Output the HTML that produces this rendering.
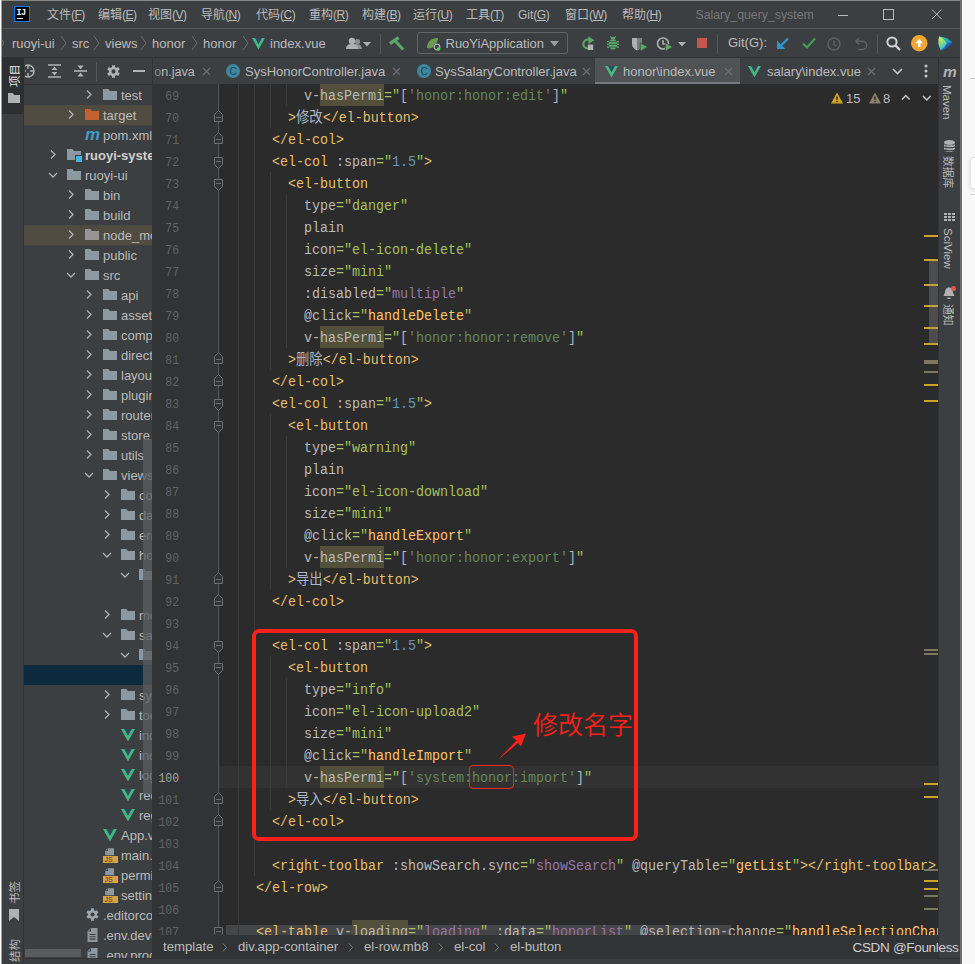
<!DOCTYPE html><html><head><meta charset="utf-8"><title>IDE</title><style>
*{box-sizing:border-box;margin:0;padding:0}
html,body{width:975px;height:964px;overflow:hidden;background:#fff}
body{position:relative;font-family:"Liberation Sans","Noto Sans CJK SC",sans-serif;font-size:13px;color:#bbb}
.abs{position:absolute}
#win{position:absolute;left:2px;top:0;width:958px;height:964px;background:#3c3f41;overflow:hidden}
.t{position:absolute;white-space:nowrap;line-height:20px}
svg{position:absolute;overflow:visible}
#code{position:absolute;left:150px;top:84px;width:786px;height:852px;background:#2b2b2b;overflow:hidden}
.ln{position:absolute;left:0;width:786px;height:22px;line-height:22px;font-family:"Liberation Mono","Noto Sans CJK SC",monospace;font-size:13.33px;white-space:pre;color:#a9b7c6}
.ln .no{position:absolute;left:0;width:27px;text-align:right;color:#606366;font-size:12.3px;transform:scaleX(.93);transform-origin:100% 50%}
.ln .c{position:absolute;left:72px;transform:scaleY(1.13);transform-origin:0 15.3px}
.tg{color:#e8bf6a}.at{color:#bababa}.st{color:#a5c261}.js{color:#6a8759}.nu{color:#6897bb}.pu{color:#9876aa}.fn{color:#ffc66d}.tx{color:#a9b7c6}
.hl{background:#52503a}
.hl2{background:#40464b}
#proj{position:absolute;left:22px;top:85px;width:128px;height:873px;overflow:hidden;background:#3c3f41}
.row{position:absolute;left:0;width:128px;height:20px}
.row .t{font-size:13px;color:#bbb;top:0.700px}
</style></head><body><div id="win"><div class="abs" style="left:0px;top:0px;width:958px;height:29px;background:#3c3f41;border-bottom:1px solid #555555"></div>
<div class="abs" style="left:0px;top:0px;width:958px;height:1px;background:#888888;"></div>
<div class="abs" style="left:12px;top:6px;width:16px;height:16px;background:#000;border:1px solid #087cfa;color:#fff;font:bold 8.500px/8px 'Liberation Mono',monospace;letter-spacing:-0.600px;padding:1.500px 0 0 1.500px">IJ<div style="width:6px;height:1px;background:#fff;margin-top:1.500px"></div></div>
<div class="t" style="left:45px;top:5px;font-size:12px;color:#bbb;">文件<span style="letter-spacing:-0.5px">(<u>F</u>)</span></div>
<div class="t" style="left:96px;top:5px;font-size:12px;color:#bbb;">编辑<span style="letter-spacing:-0.5px">(<u>E</u>)</span></div>
<div class="t" style="left:146px;top:5px;font-size:12px;color:#bbb;">视图<span style="letter-spacing:-0.5px">(<u>V</u>)</span></div>
<div class="t" style="left:199px;top:5px;font-size:12px;color:#bbb;">导航<span style="letter-spacing:-0.5px">(<u>N</u>)</span></div>
<div class="t" style="left:254px;top:5px;font-size:12px;color:#bbb;">代码<span style="letter-spacing:-0.5px">(<u>C</u>)</span></div>
<div class="t" style="left:307px;top:5px;font-size:12px;color:#bbb;">重构<span style="letter-spacing:-0.5px">(<u>R</u>)</span></div>
<div class="t" style="left:360px;top:5px;font-size:12px;color:#bbb;">构建<span style="letter-spacing:-0.5px">(<u>B</u>)</span></div>
<div class="t" style="left:411px;top:5px;font-size:12px;color:#bbb;">运行<span style="letter-spacing:-0.5px">(<u>U</u>)</span></div>
<div class="t" style="left:464px;top:5px;font-size:12px;color:#bbb;">工具<span style="letter-spacing:-0.5px">(<u>T</u>)</span></div>
<div class="t" style="left:516px;top:5px;font-size:12px;color:#bbb;">Git<span style="letter-spacing:-0.5px">(<u>G</u>)</span></div>
<div class="t" style="left:563px;top:5px;font-size:12px;color:#bbb;">窗口<span style="letter-spacing:-0.5px">(<u>W</u>)</span></div>
<div class="t" style="left:620px;top:5px;font-size:12px;color:#bbb;">帮助<span style="letter-spacing:-0.5px">(<u>H</u>)</span></div>
<div class="t" style="left:693.5px;top:4.5px;font-size:12.3px;color:#787878;">Salary_query_system</div>
<svg style="left:834.5px;top:8px;" width="14" height="14" viewBox="0 0 14 14"><path d="M1 7.5h10" stroke="#bbb" stroke-width="1" fill="none"/></svg>
<svg style="left:880px;top:8px;" width="14" height="14" viewBox="0 0 14 14"><rect x="1.5" y="1.5" width="10" height="10" stroke="#bbb" stroke-width="1" fill="none"/></svg>
<svg style="left:929px;top:8px;" width="14" height="14" viewBox="0 0 14 14"><path d="M1 1.5l9.500 9.500M10.500 1.5L1 11" stroke="#bbb" stroke-width="1" fill="none"/></svg>
<div class="abs" style="left:0px;top:30px;width:958px;height:28px;background:#3c3f41;border-bottom:1px solid #323232"></div>
<div class="t" style="left:10px;top:33.5px;font-size:13px;color:#bbb;">ruoyi-ui</div>
<div class="t" style="left:70px;top:33.5px;font-size:13px;color:#bbb;">src</div>
<div class="t" style="left:103px;top:33.5px;font-size:13px;color:#bbb;">views</div>
<div class="t" style="left:150px;top:33.5px;font-size:13px;color:#bbb;">honor</div>
<div class="t" style="left:201px;top:33.5px;font-size:13px;color:#bbb;">honor</div>
<svg style="left:-4px;top:35px;" width="8" height="16" viewBox="0 0 8 16"><path d="M1 1l5 7-5 7" stroke="#6c6f71" stroke-width="1" fill="none"/></svg>
<svg style="left:58px;top:35px;" width="8" height="16" viewBox="0 0 8 16"><path d="M1 1l5 7-5 7" stroke="#6c6f71" stroke-width="1" fill="none"/></svg>
<svg style="left:91px;top:35px;" width="8" height="16" viewBox="0 0 8 16"><path d="M1 1l5 7-5 7" stroke="#6c6f71" stroke-width="1" fill="none"/></svg>
<svg style="left:138px;top:35px;" width="8" height="16" viewBox="0 0 8 16"><path d="M1 1l5 7-5 7" stroke="#6c6f71" stroke-width="1" fill="none"/></svg>
<svg style="left:189px;top:35px;" width="8" height="16" viewBox="0 0 8 16"><path d="M1 1l5 7-5 7" stroke="#6c6f71" stroke-width="1" fill="none"/></svg>
<svg style="left:240px;top:35px;" width="8" height="16" viewBox="0 0 8 16"><path d="M1 1l5 7-5 7" stroke="#6c6f71" stroke-width="1" fill="none"/></svg>
<svg style="left:250px;top:37px;" width="13" height="13" viewBox="0 0 13 13"><path d="M0 1h3.2L6.5 7 9.8 1H13L6.5 12.5z" fill="#41b883"/><path d="M3.2 1h2.3l1 1.8 1-1.8h2.3L6.5 7z" fill="#35495e"/></svg>
<div class="t" style="left:268px;top:33.5px;font-size:13px;color:#bbb;">index.vue</div>
<svg style="left:344px;top:37px;" width="16" height="14" viewBox="0 0 16 14"><circle cx="6" cy="4" r="3.2" fill="#afb1b3"/><path d="M0 12c0-4 3-5 6-5s6 1 6 5z" fill="#afb1b3"/><circle cx="11.5" cy="4.5" r="2.6" fill="#afb1b3" opacity=".7"/><path d="M10 12c0-3-.5-4-1.5-4.8C12 6.5 16 7.5 16 12z" fill="#afb1b3" opacity=".7"/></svg>
<svg style="left:361px;top:42px;" width="8" height="5" viewBox="0 0 8 5"><path d="M0 0h8L4 4.5z" fill="#afb1b3"/></svg>
<div class="abs" style="left:378px;top:34px;width:1px;height:20px;background:#555758;"></div>
<svg style="left:387px;top:35.5px;" width="16" height="16" viewBox="0 0 16 16"><path d="M0 6.3L8.8 0.3 10.6 3 1.9 9z" fill="#59a869"/><path d="M4.800 5.6L7.3 3.9 15.3 12.6 13 14.6z" fill="#59a869"/></svg>
<div class="abs" style="left:415px;top:32px;width:151px;height:22px;border:1px solid #646464;border-radius:3px"></div>
<svg style="left:424px;top:36px;" width="16" height="16" viewBox="0 0 16 16"><path d="M1 12c0-6 4-10 11-10 0 2-.5 4-2 5.5-1 4-5 5.500-9 4.500z" fill="#6d9a4f"/><circle cx="11" cy="11" r="3.600" fill="#3c3f41"/><circle cx="11" cy="11" r="2.800" fill="none" stroke="#afb1b3" stroke-width="1.200"/><circle cx="12.5" cy="13" r="1.800" fill="#3fdc4a"/></svg>
<div class="t" style="left:443.5px;top:33.5px;font-size:13px;color:#bbb;">RuoYiApplication</div>
<svg style="left:548px;top:41px;" width="9" height="6" viewBox="0 0 9 6"><path d="M0 0h9L4.5 5.500z" fill="#9a9da0"/></svg>
<svg style="left:579px;top:36px;" width="14" height="14" viewBox="0 0 14 14"><path d="M7.6 3.7A4.4 4.4 0 1 0 7 12.4" stroke="#59a869" stroke-width="2" fill="none"/><path d="M7.3 0.3l6 3.900-6 3.800z" fill="#59a869"/><rect x="6.800" y="8.600" width="5.400" height="5.400" fill="#afb1b3"/></svg>
<svg style="left:605px;top:36px;" width="12" height="14" viewBox="0 0 12 14"><ellipse cx="6" cy="8.200" rx="4.300" ry="5.200" fill="#59a869"/><path d="M3.800 3a2.200 2.200 0 0 1 4.400 0z" fill="#59a869"/><path d="M3.200 0.300l1.600 2M8.800 0.300L7.200 2.300" stroke="#59a869" stroke-width="1.100" fill="none"/><path d="M0 5.600h12M0 8.400h12M0 11.200h12" stroke="#59a869" stroke-width="1.300"/><path d="M2 5.600h8M2 8.400h8M2 11.200h8" stroke="#3c3f41" stroke-width="0.700"/></svg>
<svg style="left:629px;top:36px;" width="17" height="16" viewBox="0 0 17 16"><path d="M1 2h10v6c0 3-2.500 5.500-5 6.500C3.500 13.500 1 11 1 8z" fill="#afb1b3"/><path d="M6 2h5v6c0 3-2.500 5.500-5 6.500z" fill="#7a7d80"/><path d="M9.300 6.800l7.400 4.200-7.400 4.200z" fill="#59a869" stroke="#3c3f41" stroke-width="0.700"/></svg>
<svg style="left:654px;top:36px;" width="17" height="16" viewBox="0 0 17 16"><circle cx="7" cy="7.500" r="5.500" fill="none" stroke="#afb1b3" stroke-width="1.600"/><path d="M7 4v4h3" stroke="#afb1b3" stroke-width="1.500" fill="none"/><path d="M9.300 6.800l7.400 4.200-7.400 4.200z" fill="#59a869" stroke="#3c3f41" stroke-width="0.700"/></svg>
<svg style="left:675.8px;top:42px;" width="8" height="5" viewBox="0 0 8 5"><path d="M0 0h8L4 4.500z" fill="#afb1b3"/></svg>
<div class="abs" style="left:695px;top:38px;width:10px;height:10px;background:#c75450;"></div>
<div class="abs" style="left:715px;top:34px;width:1px;height:20px;background:#555758;"></div>
<div class="t" style="left:726px;top:33px;font-size:13px;color:#bbb;">Git(G):</div>
<svg style="left:774px;top:38px;" width="13" height="11" viewBox="0 0 13 11"><path d="M12 0.500L3 9.500" stroke="#3592c4" stroke-width="2.400" fill="none"/><path d="M1 2.500v8.500h8.500z" fill="#3592c4"/></svg>
<svg style="left:800px;top:37px;" width="14" height="12" viewBox="0 0 14 12"><path d="M1 6.500l4 4 8-9" stroke="#499c54" stroke-width="2.200" fill="none"/></svg>
<svg style="left:825px;top:37px;" width="14" height="14" viewBox="0 0 14 14"><circle cx="7" cy="7" r="6" fill="none" stroke="#5e6163" stroke-width="1.500"/><path d="M7 3.500v4l2.500 1.500" stroke="#5e6163" stroke-width="1.400" fill="none"/></svg>
<svg style="left:853px;top:37px;" width="13" height="14" viewBox="0 0 13 14"><path d="M4 1L1 4.200l3 3.200" stroke="#5e6163" stroke-width="1.500" fill="none"/><path d="M1.500 4.200h6a4 4 0 0 1 0 8.300h-4" stroke="#5e6163" stroke-width="1.500" fill="none"/></svg>
<div class="abs" style="left:875px;top:34px;width:1px;height:20px;background:#555758;"></div>
<svg style="left:884px;top:36px;" width="15" height="15" viewBox="0 0 15 15"><circle cx="6" cy="6" r="4.600" fill="none" stroke="#d0d2d4" stroke-width="2"/><path d="M9.500 9.500l4.500 4.500" stroke="#d0d2d4" stroke-width="2.400"/></svg>
<svg style="left:908.8px;top:34.8px;" width="16.5" height="16.5" viewBox="0 0 16.5 16.5"><circle cx="8.250" cy="8.250" r="8.250" fill="#f0a732"/><path d="M8.250 4L12.200 8.300H9.450V12.100H7.050V8.300H4.300z" fill="#fff"/></svg>
<svg style="left:936px;top:35.5px;" width="15" height="15" viewBox="0 0 15 15"><defs><linearGradient id="lg1" x1="0.200" y1="0" x2="0.500" y2="1"><stop offset="0" stop-color="#e6f03a"/><stop offset="0.450" stop-color="#8fdc7a"/><stop offset="1" stop-color="#1fb4e4"/></linearGradient><linearGradient id="lg2" x1="0" y1="0" x2="1" y2="1"><stop offset="0" stop-color="#46c8a0"/><stop offset="1" stop-color="#1488dc"/></linearGradient></defs><path d="M1 0.500Q9 1 14.200 6.500Q10 12.500 2.800 14.600Q-0.800 8 1 0.500z" fill="#1763c4"/><path d="M1 0.500Q9 1 14.200 6.500L8.800 7.200z" fill="url(#lg2)"/><path d="M1 0.500Q6.500 3 8.800 7.200Q7 11.500 2.800 14.600Q-0.800 8 1 0.500z" fill="url(#lg1)"/></svg>
<div class="abs" style="left:0px;top:58px;width:22px;height:906px;background:#3c3f41;border-right:1px solid #323232"></div>
<div class="abs" style="left:0px;top:58px;width:22px;height:56px;background:#2d2f30;"></div>
<div class="t" style="left:6px;top:86.5px;font-size:11.5px;color:#e0e0e0;transform-origin:0 0;transform:rotate(-90deg);line-height:14px;">项目</div>
<svg style="left:6px;top:93px;" width="12" height="10" viewBox="0 0 12 10"><path d="M0 0h5l1 2h6v8H0z" fill="#afb1b3"/></svg>
<div class="t" style="left:6px;top:904px;font-size:11.5px;color:#bbb;transform-origin:0 0;transform:rotate(-90deg);line-height:14px;">书签</div>
<svg style="left:7px;top:908.5px;" width="10" height="12" viewBox="0 0 10 12"><path d="M0 0h10v12L5 8 0 12z" fill="#afb1b3"/></svg>
<div class="t" style="left:6px;top:962px;font-size:11.5px;color:#bbb;transform-origin:0 0;transform:rotate(-90deg);line-height:14px;">结构</div>
<div class="abs" style="left:22px;top:58px;width:128px;height:27px;background:#3c3f41;border-bottom:1px solid #323232"></div>
<svg style="left:17.5px;top:63px;clip-path:inset(0 0 0 5.5px)" width="16" height="16" viewBox="0 0 16 16"><circle cx="8" cy="8" r="6" fill="none" stroke="#afb1b3" stroke-width="1.500"/><path d="M8 2v4M8 10v4M2 8h4M10 8h4" stroke="#afb1b3" stroke-width="1.500"/></svg>
<svg style="left:46px;top:64px;" width="14" height="14" viewBox="0 0 14 14"><path d="M0 1h13M0 13h13" stroke="#afb1b3" stroke-width="1.600"/><path d="M6.500 2.500l3 3.500h-6zM6.500 11.500l3-3.500h-6z" fill="#afb1b3"/></svg>
<svg style="left:72px;top:64px;" width="14" height="14" viewBox="0 0 14 14"><path d="M0 7h13" stroke="#afb1b3" stroke-width="1.600"/><path d="M6.500 5.500l3-4h-6zM6.500 8.500l3 4h-6z" fill="#afb1b3"/></svg>
<div class="abs" style="left:94px;top:62px;width:1px;height:19px;background:#555758;"></div>
<svg style="left:103.5px;top:63.5px;transform:scale(.93)" width="15" height="15" viewBox="0 0 15 15"><path d="M5.86 2.78L5.90 0.68L9.10 0.68L9.14 2.78L10.77 3.72L12.60 2.71L14.20 5.48L12.41 6.56L12.41 8.44L14.20 9.52L12.60 12.29L10.77 11.28L9.14 12.22L9.10 14.32L5.90 14.32L5.86 12.22L4.23 11.28L2.40 12.29L0.80 9.52L2.59 8.44L2.59 6.56L0.80 5.48L2.40 2.71L4.23 3.72z M5.20 7.50a2.3 2.3 0 1 0 4.6 0a2.3 2.3 0 1 0 -4.6 0z" fill="#afb1b3" fill-rule="evenodd"/></svg>
<svg style="left:131px;top:70px;" width="12" height="2" viewBox="0 0 12 2"><rect width="12" height="2" fill="#afb1b3"/></svg>
<div id="proj"><div class="row" style="top:0px;"><svg style="left:62px;top:4px" width="7" height="11" viewBox="0 0 7 11"><path d="M1 1.500l4 4L1 9.500" stroke="#afb1b3" stroke-width="1.300" fill="none"/></svg><svg style="left:79px;top:3px" width="14" height="12" viewBox="0 0 14 12"><path d="M0 1h5.500l1.300 2H14v9H0z" fill="#8c99a1"/></svg><div class="t" style="left:97px;">test</div></div><div class="row" style="top:20px;background:#4f4b41"><svg style="left:44px;top:4px" width="7" height="11" viewBox="0 0 7 11"><path d="M1 1.500l4 4L1 9.500" stroke="#afb1b3" stroke-width="1.300" fill="none"/></svg><svg style="left:61px;top:3px" width="14" height="12" viewBox="0 0 14 12"><path d="M0 1h5.500l1.300 2H14v9H0z" fill="#c0622f"/></svg><div class="t" style="left:79px;">target</div></div><div class="row" style="top:40px;"><svg style="left:61px;top:3px" width="15" height="14" viewBox="0 0 15 14"><text x="0" y="12" font-family="Liberation Sans,sans-serif" font-size="17" font-weight="bold" font-style="italic" fill="#3e9cc9">m</text></svg><div class="t" style="left:79px;">pom.xml</div></div><div class="row" style="top:60px;"><svg style="left:26px;top:4px" width="7" height="11" viewBox="0 0 7 11"><path d="M1 1.500l4 4L1 9.500" stroke="#afb1b3" stroke-width="1.300" fill="none"/></svg><svg style="left:43px;top:3px" width="14" height="12" viewBox="0 0 14 12"><path d="M0 1h5.500l1.300 2H14v9H0z" fill="#8c99a1"/></svg><div class="abs" style="left:51px;top:10px;width:8px;height:8px;background:#40b6e0;border:1px solid #3c3f41"></div><div class="t" style="left:61px;font-weight:bold;color:#d0d0d0">ruoyi-system</div></div><div class="row" style="top:80px;"><svg style="left:24px;top:7px" width="10" height="7" viewBox="0 0 10 7"><path d="M1 1l4 4L9 1" stroke="#afb1b3" stroke-width="1.300" fill="none"/></svg><svg style="left:43px;top:3px" width="14" height="12" viewBox="0 0 14 12"><path d="M0 1h5.500l1.300 2H14v9H0z" fill="#8c99a1"/></svg><div class="t" style="left:61px;">ruoyi-ui</div></div><div class="row" style="top:100px;"><svg style="left:44px;top:4px" width="7" height="11" viewBox="0 0 7 11"><path d="M1 1.500l4 4L1 9.500" stroke="#afb1b3" stroke-width="1.300" fill="none"/></svg><svg style="left:61px;top:3px" width="14" height="12" viewBox="0 0 14 12"><path d="M0 1h5.500l1.300 2H14v9H0z" fill="#8c99a1"/></svg><div class="t" style="left:79px;">bin</div></div><div class="row" style="top:120px;"><svg style="left:44px;top:4px" width="7" height="11" viewBox="0 0 7 11"><path d="M1 1.500l4 4L1 9.500" stroke="#afb1b3" stroke-width="1.300" fill="none"/></svg><svg style="left:61px;top:3px" width="14" height="12" viewBox="0 0 14 12"><path d="M0 1h5.500l1.300 2H14v9H0z" fill="#8c99a1"/></svg><div class="t" style="left:79px;">build</div></div><div class="row" style="top:140px;background:#4f4b41"><svg style="left:44px;top:4px" width="7" height="11" viewBox="0 0 7 11"><path d="M1 1.500l4 4L1 9.500" stroke="#afb1b3" stroke-width="1.300" fill="none"/></svg><svg style="left:61px;top:3px" width="14" height="12" viewBox="0 0 14 12"><path d="M0 1h5.500l1.300 2H14v9H0z" fill="#959595"/></svg><div class="t" style="left:79px;">node_modules</div></div><div class="row" style="top:160px;"><svg style="left:44px;top:4px" width="7" height="11" viewBox="0 0 7 11"><path d="M1 1.500l4 4L1 9.500" stroke="#afb1b3" stroke-width="1.300" fill="none"/></svg><svg style="left:61px;top:3px" width="14" height="12" viewBox="0 0 14 12"><path d="M0 1h5.500l1.300 2H14v9H0z" fill="#8c99a1"/></svg><div class="t" style="left:79px;">public</div></div><div class="row" style="top:180px;"><svg style="left:42px;top:7px" width="10" height="7" viewBox="0 0 10 7"><path d="M1 1l4 4L9 1" stroke="#afb1b3" stroke-width="1.300" fill="none"/></svg><svg style="left:61px;top:3px" width="14" height="12" viewBox="0 0 14 12"><path d="M0 1h5.500l1.300 2H14v9H0z" fill="#8c99a1"/></svg><div class="t" style="left:79px;">src</div></div><div class="row" style="top:200px;"><svg style="left:62px;top:4px" width="7" height="11" viewBox="0 0 7 11"><path d="M1 1.500l4 4L1 9.500" stroke="#afb1b3" stroke-width="1.300" fill="none"/></svg><svg style="left:79px;top:3px" width="14" height="12" viewBox="0 0 14 12"><path d="M0 1h5.500l1.300 2H14v9H0z" fill="#8c99a1"/></svg><div class="t" style="left:97px;">api</div></div><div class="row" style="top:220px;"><svg style="left:62px;top:4px" width="7" height="11" viewBox="0 0 7 11"><path d="M1 1.500l4 4L1 9.500" stroke="#afb1b3" stroke-width="1.300" fill="none"/></svg><svg style="left:79px;top:3px" width="14" height="12" viewBox="0 0 14 12"><path d="M0 1h5.500l1.300 2H14v9H0z" fill="#8c99a1"/></svg><div class="t" style="left:97px;">assets</div></div><div class="row" style="top:240px;"><svg style="left:62px;top:4px" width="7" height="11" viewBox="0 0 7 11"><path d="M1 1.500l4 4L1 9.500" stroke="#afb1b3" stroke-width="1.300" fill="none"/></svg><svg style="left:79px;top:3px" width="14" height="12" viewBox="0 0 14 12"><path d="M0 1h5.500l1.300 2H14v9H0z" fill="#8c99a1"/></svg><div class="t" style="left:97px;">components</div></div><div class="row" style="top:260px;"><svg style="left:62px;top:4px" width="7" height="11" viewBox="0 0 7 11"><path d="M1 1.500l4 4L1 9.500" stroke="#afb1b3" stroke-width="1.300" fill="none"/></svg><svg style="left:79px;top:3px" width="14" height="12" viewBox="0 0 14 12"><path d="M0 1h5.500l1.300 2H14v9H0z" fill="#8c99a1"/></svg><div class="t" style="left:97px;">directive</div></div><div class="row" style="top:280px;"><svg style="left:62px;top:4px" width="7" height="11" viewBox="0 0 7 11"><path d="M1 1.500l4 4L1 9.500" stroke="#afb1b3" stroke-width="1.300" fill="none"/></svg><svg style="left:79px;top:3px" width="14" height="12" viewBox="0 0 14 12"><path d="M0 1h5.500l1.300 2H14v9H0z" fill="#8c99a1"/></svg><div class="t" style="left:97px;">layout</div></div><div class="row" style="top:300px;"><svg style="left:62px;top:4px" width="7" height="11" viewBox="0 0 7 11"><path d="M1 1.500l4 4L1 9.500" stroke="#afb1b3" stroke-width="1.300" fill="none"/></svg><svg style="left:79px;top:3px" width="14" height="12" viewBox="0 0 14 12"><path d="M0 1h5.500l1.300 2H14v9H0z" fill="#8c99a1"/></svg><div class="t" style="left:97px;">plugins</div></div><div class="row" style="top:320px;"><svg style="left:62px;top:4px" width="7" height="11" viewBox="0 0 7 11"><path d="M1 1.500l4 4L1 9.500" stroke="#afb1b3" stroke-width="1.300" fill="none"/></svg><svg style="left:79px;top:3px" width="14" height="12" viewBox="0 0 14 12"><path d="M0 1h5.500l1.300 2H14v9H0z" fill="#8c99a1"/></svg><div class="t" style="left:97px;">router</div></div><div class="row" style="top:340px;"><svg style="left:62px;top:4px" width="7" height="11" viewBox="0 0 7 11"><path d="M1 1.500l4 4L1 9.500" stroke="#afb1b3" stroke-width="1.300" fill="none"/></svg><svg style="left:79px;top:3px" width="14" height="12" viewBox="0 0 14 12"><path d="M0 1h5.500l1.300 2H14v9H0z" fill="#8c99a1"/></svg><div class="t" style="left:97px;">store</div></div><div class="row" style="top:360px;"><svg style="left:62px;top:4px" width="7" height="11" viewBox="0 0 7 11"><path d="M1 1.500l4 4L1 9.500" stroke="#afb1b3" stroke-width="1.300" fill="none"/></svg><svg style="left:79px;top:3px" width="14" height="12" viewBox="0 0 14 12"><path d="M0 1h5.500l1.300 2H14v9H0z" fill="#8c99a1"/></svg><div class="t" style="left:97px;">utils</div></div><div class="row" style="top:380px;"><svg style="left:60px;top:7px" width="10" height="7" viewBox="0 0 10 7"><path d="M1 1l4 4L9 1" stroke="#afb1b3" stroke-width="1.300" fill="none"/></svg><svg style="left:79px;top:3px" width="14" height="12" viewBox="0 0 14 12"><path d="M0 1h5.500l1.300 2H14v9H0z" fill="#8c99a1"/></svg><div class="t" style="left:97px;">views</div></div><div class="row" style="top:400px;"><svg style="left:80px;top:4px" width="7" height="11" viewBox="0 0 7 11"><path d="M1 1.500l4 4L1 9.500" stroke="#afb1b3" stroke-width="1.300" fill="none"/></svg><svg style="left:97px;top:3px" width="14" height="12" viewBox="0 0 14 12"><path d="M0 1h5.500l1.300 2H14v9H0z" fill="#8c99a1"/></svg><div class="t" style="left:115px;">components</div></div><div class="row" style="top:420px;"><svg style="left:80px;top:4px" width="7" height="11" viewBox="0 0 7 11"><path d="M1 1.500l4 4L1 9.500" stroke="#afb1b3" stroke-width="1.300" fill="none"/></svg><svg style="left:97px;top:3px" width="14" height="12" viewBox="0 0 14 12"><path d="M0 1h5.500l1.300 2H14v9H0z" fill="#8c99a1"/></svg><div class="t" style="left:115px;">dashboard</div></div><div class="row" style="top:440px;"><svg style="left:80px;top:4px" width="7" height="11" viewBox="0 0 7 11"><path d="M1 1.500l4 4L1 9.500" stroke="#afb1b3" stroke-width="1.300" fill="none"/></svg><svg style="left:97px;top:3px" width="14" height="12" viewBox="0 0 14 12"><path d="M0 1h5.500l1.300 2H14v9H0z" fill="#8c99a1"/></svg><div class="t" style="left:115px;">error</div></div><div class="row" style="top:460px;"><svg style="left:78px;top:7px" width="10" height="7" viewBox="0 0 10 7"><path d="M1 1l4 4L9 1" stroke="#afb1b3" stroke-width="1.300" fill="none"/></svg><svg style="left:97px;top:3px" width="14" height="12" viewBox="0 0 14 12"><path d="M0 1h5.500l1.300 2H14v9H0z" fill="#8c99a1"/></svg><div class="t" style="left:115px;">honor</div></div><div class="row" style="top:480px;"><svg style="left:96px;top:7px" width="10" height="7" viewBox="0 0 10 7"><path d="M1 1l4 4L9 1" stroke="#afb1b3" stroke-width="1.300" fill="none"/></svg><svg style="left:115px;top:3px" width="14" height="12" viewBox="0 0 14 12"><path d="M0 1h5.500l1.300 2H14v9H0z" fill="#8c99a1"/></svg><div class="t" style="left:133px;"></div></div><div class="row" style="top:500px;"><div class="t" style="left:151px;"></div></div><div class="row" style="top:520px;"><svg style="left:80px;top:4px" width="7" height="11" viewBox="0 0 7 11"><path d="M1 1.500l4 4L1 9.500" stroke="#afb1b3" stroke-width="1.300" fill="none"/></svg><svg style="left:97px;top:3px" width="14" height="12" viewBox="0 0 14 12"><path d="M0 1h5.500l1.300 2H14v9H0z" fill="#8c99a1"/></svg><div class="t" style="left:115px;">monitor</div></div><div class="row" style="top:540px;"><svg style="left:78px;top:7px" width="10" height="7" viewBox="0 0 10 7"><path d="M1 1l4 4L9 1" stroke="#afb1b3" stroke-width="1.300" fill="none"/></svg><svg style="left:97px;top:3px" width="14" height="12" viewBox="0 0 14 12"><path d="M0 1h5.500l1.300 2H14v9H0z" fill="#8c99a1"/></svg><div class="t" style="left:115px;">salary</div></div><div class="row" style="top:560px;"><svg style="left:96px;top:7px" width="10" height="7" viewBox="0 0 10 7"><path d="M1 1l4 4L9 1" stroke="#afb1b3" stroke-width="1.300" fill="none"/></svg><svg style="left:115px;top:3px" width="14" height="12" viewBox="0 0 14 12"><path d="M0 1h5.500l1.300 2H14v9H0z" fill="#8c99a1"/></svg><div class="t" style="left:133px;"></div></div><div class="row" style="top:580px;background:#0d293e"><div class="t" style="left:151px;"></div></div><div class="row" style="top:600px;"><svg style="left:80px;top:4px" width="7" height="11" viewBox="0 0 7 11"><path d="M1 1.500l4 4L1 9.500" stroke="#afb1b3" stroke-width="1.300" fill="none"/></svg><svg style="left:97px;top:3px" width="14" height="12" viewBox="0 0 14 12"><path d="M0 1h5.500l1.300 2H14v9H0z" fill="#8c99a1"/></svg><div class="t" style="left:115px;">system</div></div><div class="row" style="top:620px;"><svg style="left:80px;top:4px" width="7" height="11" viewBox="0 0 7 11"><path d="M1 1.500l4 4L1 9.500" stroke="#afb1b3" stroke-width="1.300" fill="none"/></svg><svg style="left:97px;top:3px" width="14" height="12" viewBox="0 0 14 12"><path d="M0 1h5.500l1.300 2H14v9H0z" fill="#8c99a1"/></svg><div class="t" style="left:115px;">tool</div></div><div class="row" style="top:640px;"><svg style="left:97px;top:3px" width="14" height="14" viewBox="0 0 14 14"><path d="M0 1h3.400L7 7.500 10.600 1H14L7 13.500z" fill="#41b883"/><path d="M3.400 1h2.400L7 3l1.200-2h2.400L7 7.500z" fill="#35495e"/></svg><div class="t" style="left:115px;">index.vue</div></div><div class="row" style="top:660px;"><svg style="left:97px;top:3px" width="14" height="14" viewBox="0 0 14 14"><path d="M0 1h3.400L7 7.500 10.600 1H14L7 13.500z" fill="#41b883"/><path d="M3.400 1h2.400L7 3l1.200-2h2.400L7 7.500z" fill="#35495e"/></svg><div class="t" style="left:115px;">index_v1.vue</div></div><div class="row" style="top:680px;"><svg style="left:97px;top:3px" width="14" height="14" viewBox="0 0 14 14"><path d="M0 1h3.400L7 7.500 10.600 1H14L7 13.500z" fill="#41b883"/><path d="M3.400 1h2.400L7 3l1.200-2h2.400L7 7.500z" fill="#35495e"/></svg><div class="t" style="left:115px;">login.vue</div></div><div class="row" style="top:700px;"><svg style="left:97px;top:3px" width="14" height="14" viewBox="0 0 14 14"><path d="M0 1h3.400L7 7.500 10.600 1H14L7 13.500z" fill="#41b883"/><path d="M3.400 1h2.400L7 3l1.200-2h2.400L7 7.500z" fill="#35495e"/></svg><div class="t" style="left:115px;">redirect.vue</div></div><div class="row" style="top:720px;"><svg style="left:97px;top:3px" width="14" height="14" viewBox="0 0 14 14"><path d="M0 1h3.400L7 7.500 10.600 1H14L7 13.500z" fill="#41b883"/><path d="M3.400 1h2.400L7 3l1.200-2h2.400L7 7.500z" fill="#35495e"/></svg><div class="t" style="left:115px;">register.vue</div></div><div class="row" style="top:740px;"><svg style="left:79px;top:3px" width="14" height="14" viewBox="0 0 14 14"><path d="M0 1h3.400L7 7.500 10.600 1H14L7 13.500z" fill="#41b883"/><path d="M3.400 1h2.400L7 3l1.200-2h2.400L7 7.500z" fill="#35495e"/></svg><div class="t" style="left:97px;">App.vue</div></div><div class="row" style="top:760px;"><svg style="left:79px;top:3px" width="15" height="15" viewBox="0 0 15 15"><path d="M5 0.200h6v7.100H2.200V3z" fill="#9aa7b0" opacity=".85"/><path d="M5 0.200L2.200 3H5z" fill="#3c3f41"/><path d="M4.300 0.200v2.100H2.200z" fill="#9aa7b0" opacity=".6"/><rect x="0" y="8" width="15" height="7" fill="#d9a343"/><text x="1.500" y="14" font-family="Liberation Sans,sans-serif" font-size="7" fill="#3c3f41">JS</text></svg><div class="t" style="left:97px;">main.js</div></div><div class="row" style="top:780px;"><svg style="left:79px;top:3px" width="15" height="15" viewBox="0 0 15 15"><path d="M5 0.200h6v7.100H2.200V3z" fill="#9aa7b0" opacity=".85"/><path d="M5 0.200L2.200 3H5z" fill="#3c3f41"/><path d="M4.300 0.200v2.100H2.200z" fill="#9aa7b0" opacity=".6"/><rect x="0" y="8" width="15" height="7" fill="#d9a343"/><text x="1.500" y="14" font-family="Liberation Sans,sans-serif" font-size="7" fill="#3c3f41">JS</text></svg><div class="t" style="left:97px;">permission.js</div></div><div class="row" style="top:800px;"><svg style="left:79px;top:3px" width="15" height="15" viewBox="0 0 15 15"><path d="M5 0.200h6v7.100H2.200V3z" fill="#9aa7b0" opacity=".85"/><path d="M5 0.200L2.200 3H5z" fill="#3c3f41"/><path d="M4.300 0.200v2.100H2.200z" fill="#9aa7b0" opacity=".6"/><rect x="0" y="8" width="15" height="7" fill="#d9a343"/><text x="1.500" y="14" font-family="Liberation Sans,sans-serif" font-size="7" fill="#3c3f41">JS</text></svg><div class="t" style="left:97px;">settings.js</div></div><div class="row" style="top:820px;"><svg style="left:60.5px;top:2px;transform:scale(.9)" width="15" height="15" viewBox="0 0 15 15"><path d="M5.86 2.78L5.90 0.68L9.10 0.68L9.14 2.78L10.77 3.72L12.60 2.71L14.20 5.48L12.41 6.56L12.41 8.44L14.20 9.52L12.60 12.29L10.77 11.28L9.14 12.22L9.10 14.32L5.90 14.32L5.86 12.22L4.23 11.28L2.40 12.29L0.80 9.52L2.59 8.44L2.59 6.56L0.80 5.48L2.40 2.71L4.23 3.72z M5.20 7.50a2.3 2.3 0 1 0 4.6 0a2.3 2.3 0 1 0 -4.6 0z" fill="#9aa7b0" fill-rule="evenodd"/></svg><div class="t" style="left:79px;">.editorconfig</div></div><div class="row" style="top:840px;"><svg style="left:62.5px;top:3px" width="11" height="14" viewBox="0 0 11 14"><path d="M4 0h6.500v14H0.500V3.500z" fill="#9aa7b0" opacity=".85"/><path d="M4 0L0.500 3.500H4z" fill="#3c3f41"/><path d="M3.200 0.300v2.600H0.600z" fill="#9aa7b0" opacity=".55"/><path d="M2.500 6.500h6M2.500 8.800h6M2.500 11.100h6" stroke="#3c3f41" stroke-width="1.100"/></svg><div class="t" style="left:79px;">.env.development</div></div><div class="row" style="top:860px;"><svg style="left:62.5px;top:3px" width="11" height="14" viewBox="0 0 11 14"><path d="M4 0h6.500v14H0.500V3.500z" fill="#9aa7b0" opacity=".85"/><path d="M4 0L0.500 3.500H4z" fill="#3c3f41"/><path d="M3.200 0.300v2.600H0.600z" fill="#9aa7b0" opacity=".55"/><path d="M2.500 6.500h6M2.500 8.800h6M2.500 11.100h6" stroke="#3c3f41" stroke-width="1.100"/></svg><div class="t" style="left:79px;">.env.production</div></div><div class="abs" style="left:119px;top:354px;width:9px;height:354.5px;background:#5b5e60;opacity:.75"></div><div class="abs" style="left:1px;top:864px;width:56px;height:8px;background:#595b5d"></div></div>
<div class="abs" style="left:150px;top:58px;width:786px;height:27px;background:#3c3f41;border-bottom:1px solid #323232"></div>
<div class="abs" style="left:150px;top:58px;width:1px;height:26px;background:#323232;"></div>
<div class="abs" style="left:593px;top:58px;width:145px;height:26px;background:#4e5254;"></div>
<div class="abs" style="left:593px;top:82px;width:145px;height:3px;background:#747a80;"></div>
<div class="t" style="left:152.3px;top:62px;font-size:12.5px;color:#bbb;"><span style="opacity:.6">o</span>n.java</div>
<svg style="left:199.5px;top:67px;" width="9" height="9" viewBox="0 0 9 9"><path d="M1 1l7 7M8 1L1 8" stroke="#6e7072" stroke-width="1.100" fill="none"/></svg>
<svg style="left:224px;top:64px;" width="14" height="14" viewBox="0 0 14 14"><circle cx="7" cy="7" r="7" fill="#3e86a0"/><text x="3.400" y="10.500" font-family="Liberation Sans,sans-serif" font-size="10" fill="#23424f">C</text></svg>
<div class="t" style="left:243px;top:62px;font-size:13px;color:#bbb;">SysHonorController.java</div>
<svg style="left:390px;top:67px;" width="9" height="9" viewBox="0 0 9 9"><path d="M1 1l7 7M8 1L1 8" stroke="#6e7072" stroke-width="1.100" fill="none"/></svg>
<svg style="left:414.5px;top:64px;" width="14" height="14" viewBox="0 0 14 14"><circle cx="7" cy="7" r="7" fill="#3e86a0"/><text x="3.400" y="10.500" font-family="Liberation Sans,sans-serif" font-size="10" fill="#23424f">C</text></svg>
<div class="t" style="left:433px;top:62px;font-size:13px;color:#bbb;">SysSalaryController.java</div>
<svg style="left:580px;top:67px;" width="9" height="9" viewBox="0 0 9 9"><path d="M1 1l7 7M8 1L1 8" stroke="#6e7072" stroke-width="1.100" fill="none"/></svg>
<svg style="left:603px;top:65px;" width="13" height="13" viewBox="0 0 13 13"><path d="M0 1h3.2L6.5 7 9.8 1H13L6.5 12.5z" fill="#41b883"/><path d="M3.2 1h2.3l1 1.8 1-1.8h2.3L6.5 7z" fill="#35495e"/></svg>
<div class="t" style="left:621px;top:62px;font-size:13px;color:#bbb;">honor\index.vue</div>
<svg style="left:722px;top:67px;" width="9" height="9" viewBox="0 0 9 9"><path d="M1 1l7 7M8 1L1 8" stroke="#6e7072" stroke-width="1.100" fill="none"/></svg>
<svg style="left:746px;top:65px;" width="13" height="13" viewBox="0 0 13 13"><path d="M0 1h3.2L6.5 7 9.8 1H13L6.5 12.5z" fill="#41b883"/><path d="M3.2 1h2.3l1 1.8 1-1.8h2.3L6.5 7z" fill="#35495e"/></svg>
<div class="t" style="left:765px;top:62px;font-size:13px;color:#bbb;">salary\index.vue</div>
<svg style="left:865px;top:67px;" width="9" height="9" viewBox="0 0 9 9"><path d="M1 1l7 7M8 1L1 8" stroke="#6e7072" stroke-width="1.100" fill="none"/></svg>
<svg style="left:890px;top:68px;" width="11" height="7" viewBox="0 0 11 7"><path d="M1 1l4.500 4.500L10 1" stroke="#c8c8c8" stroke-width="1.600" fill="none"/></svg>
<svg style="left:921.5px;top:64px;" width="4" height="14" viewBox="0 0 4 14"><circle cx="2" cy="2" r="1.500" fill="#c8c8c8"/><circle cx="2" cy="7" r="1.500" fill="#c8c8c8"/><circle cx="2" cy="12" r="1.500" fill="#c8c8c8"/></svg>
<div id="code"><div class="abs" style="left:0;top:0;width:66px;height:852px;background:#313335"></div><div class="abs" style="left:66px;top:0;width:1px;height:852px;background:#555758"></div><div class="abs" style="left:168px;top:0px;width:64px;height:22px;background:#52503a"></div><div class="abs" style="left:86px;top:0px;width:1px;height:22px;background:#393939"></div><div class="abs" style="left:102px;top:0px;width:1px;height:22px;background:#393939"></div><div class="abs" style="left:118px;top:0px;width:1px;height:22px;background:#393939"></div><div class="abs" style="left:134px;top:0px;width:1px;height:22px;background:#393939"></div><div class="ln" style="top:2.2px"><span class="no" style="top:-0.7px;">69</span><span class="c" style="left:152px"><span class="at">v-</span><span class="at">hasPermi</span><span class="st">="</span><span class="tx">[</span><span class="js">'honor:honor:edit'</span><span class="tx">]</span><span class="st">"</span></span></div><div class="abs" style="left:86px;top:22px;width:1px;height:22px;background:#393939"></div><div class="abs" style="left:102px;top:22px;width:1px;height:22px;background:#393939"></div><div class="abs" style="left:118px;top:22px;width:1px;height:22px;background:#393939"></div><div class="ln" style="top:24.2px"><span class="no" style="top:-0.7px;">70</span><span class="c" style="left:136px"><span class="tg">&gt;</span><span class="tx">修改</span><span class="tg">&lt;/el-button&gt;</span></span></div><svg style="left:62px;top:25.7px" width="9" height="12" viewBox="0 0 9 12"><path d="M0.500 11.500V4.500L4.500 0.500 8.500 4.500v7z" fill="#313335" stroke="#6c6e70" stroke-width="1"/><path d="M2 7.500h5" stroke="#6c6e70" stroke-width="1"/></svg><div class="abs" style="left:86px;top:44px;width:1px;height:22px;background:#393939"></div><div class="abs" style="left:102px;top:44px;width:1px;height:22px;background:#393939"></div><div class="ln" style="top:46.2px"><span class="no" style="top:-0.7px;">71</span><span class="c" style="left:120px"><span class="tg">&lt;/el-col&gt;</span></span></div><svg style="left:62px;top:47.7px" width="9" height="12" viewBox="0 0 9 12"><path d="M0.500 11.500V4.500L4.500 0.500 8.500 4.500v7z" fill="#313335" stroke="#6c6e70" stroke-width="1"/><path d="M2 7.500h5" stroke="#6c6e70" stroke-width="1"/></svg><div class="abs" style="left:86px;top:66px;width:1px;height:22px;background:#393939"></div><div class="abs" style="left:102px;top:66px;width:1px;height:22px;background:#393939"></div><div class="ln" style="top:68.2px"><span class="no" style="top:-0.7px;">72</span><span class="c" style="left:120px"><span class="tg">&lt;el-col </span><span class="at">:span</span><span class="st">="</span><span class="nu">1.5</span><span class="st">"</span><span class="tg">&gt;</span></span></div><svg style="left:62px;top:73px" width="9" height="12" viewBox="0 0 9 12"><path d="M0.500 0.500h8V7.500L4.500 11.500 0.500 7.500z" fill="#313335" stroke="#6c6e70" stroke-width="1"/><path d="M2 4.500h5" stroke="#6c6e70" stroke-width="1"/></svg><div class="abs" style="left:86px;top:88px;width:1px;height:22px;background:#393939"></div><div class="abs" style="left:102px;top:88px;width:1px;height:22px;background:#393939"></div><div class="abs" style="left:118px;top:88px;width:1px;height:22px;background:#393939"></div><div class="ln" style="top:90.2px"><span class="no" style="top:-0.7px;">73</span><span class="c" style="left:136px"><span class="tg">&lt;el-button</span></span></div><svg style="left:62px;top:95px" width="9" height="12" viewBox="0 0 9 12"><path d="M0.500 0.500h8V7.500L4.500 11.500 0.500 7.500z" fill="#313335" stroke="#6c6e70" stroke-width="1"/><path d="M2 4.500h5" stroke="#6c6e70" stroke-width="1"/></svg><div class="abs" style="left:86px;top:110px;width:1px;height:22px;background:#393939"></div><div class="abs" style="left:102px;top:110px;width:1px;height:22px;background:#393939"></div><div class="abs" style="left:118px;top:110px;width:1px;height:22px;background:#393939"></div><div class="abs" style="left:134px;top:110px;width:1px;height:22px;background:#393939"></div><div class="ln" style="top:112.2px"><span class="no" style="top:-0.7px;">74</span><span class="c" style="left:152px"><span class="at">type</span><span class="st">="danger"</span></span></div><div class="abs" style="left:86px;top:132px;width:1px;height:22px;background:#393939"></div><div class="abs" style="left:102px;top:132px;width:1px;height:22px;background:#393939"></div><div class="abs" style="left:118px;top:132px;width:1px;height:22px;background:#393939"></div><div class="abs" style="left:134px;top:132px;width:1px;height:22px;background:#393939"></div><div class="ln" style="top:134.2px"><span class="no" style="top:-0.7px;">75</span><span class="c" style="left:152px"><span class="at">plain</span></span></div><div class="abs" style="left:86px;top:154px;width:1px;height:22px;background:#393939"></div><div class="abs" style="left:102px;top:154px;width:1px;height:22px;background:#393939"></div><div class="abs" style="left:118px;top:154px;width:1px;height:22px;background:#393939"></div><div class="abs" style="left:134px;top:154px;width:1px;height:22px;background:#393939"></div><div class="ln" style="top:156.2px"><span class="no" style="top:-0.7px;">76</span><span class="c" style="left:152px"><span class="at">icon</span><span class="st">="el-icon-delete"</span></span></div><div class="abs" style="left:86px;top:176px;width:1px;height:22px;background:#393939"></div><div class="abs" style="left:102px;top:176px;width:1px;height:22px;background:#393939"></div><div class="abs" style="left:118px;top:176px;width:1px;height:22px;background:#393939"></div><div class="abs" style="left:134px;top:176px;width:1px;height:22px;background:#393939"></div><div class="ln" style="top:178.2px"><span class="no" style="top:-0.7px;">77</span><span class="c" style="left:152px"><span class="at">size</span><span class="st">="mini"</span></span></div><div class="abs" style="left:86px;top:198px;width:1px;height:22px;background:#393939"></div><div class="abs" style="left:102px;top:198px;width:1px;height:22px;background:#393939"></div><div class="abs" style="left:118px;top:198px;width:1px;height:22px;background:#393939"></div><div class="abs" style="left:134px;top:198px;width:1px;height:22px;background:#393939"></div><div class="ln" style="top:200.2px"><span class="no" style="top:-0.7px;">78</span><span class="c" style="left:152px"><span class="at">:disabled</span><span class="st">="</span><span class="pu">multiple</span><span class="st">"</span></span></div><div class="abs" style="left:86px;top:220px;width:1px;height:22px;background:#393939"></div><div class="abs" style="left:102px;top:220px;width:1px;height:22px;background:#393939"></div><div class="abs" style="left:118px;top:220px;width:1px;height:22px;background:#393939"></div><div class="abs" style="left:134px;top:220px;width:1px;height:22px;background:#393939"></div><div class="ln" style="top:222.2px"><span class="no" style="top:-0.7px;">79</span><span class="c" style="left:152px"><span class="at">@click</span><span class="st">="</span><span class="fn">handleDelete</span><span class="st">"</span></span></div><div class="abs" style="left:168px;top:242px;width:64px;height:22px;background:#52503a"></div><div class="abs" style="left:86px;top:242px;width:1px;height:22px;background:#393939"></div><div class="abs" style="left:102px;top:242px;width:1px;height:22px;background:#393939"></div><div class="abs" style="left:118px;top:242px;width:1px;height:22px;background:#393939"></div><div class="abs" style="left:134px;top:242px;width:1px;height:22px;background:#393939"></div><div class="ln" style="top:244.2px"><span class="no" style="top:-0.7px;">80</span><span class="c" style="left:152px"><span class="at">v-</span><span class="at">hasPermi</span><span class="st">="</span><span class="tx">[</span><span class="js">'honor:honor:remove'</span><span class="tx">]</span><span class="st">"</span></span></div><div class="abs" style="left:86px;top:264px;width:1px;height:22px;background:#393939"></div><div class="abs" style="left:102px;top:264px;width:1px;height:22px;background:#393939"></div><div class="abs" style="left:118px;top:264px;width:1px;height:22px;background:#393939"></div><div class="ln" style="top:266.2px"><span class="no" style="top:-0.7px;">81</span><span class="c" style="left:136px"><span class="tg">&gt;</span><span class="tx">删除</span><span class="tg">&lt;/el-button&gt;</span></span></div><svg style="left:62px;top:267.7px" width="9" height="12" viewBox="0 0 9 12"><path d="M0.500 11.500V4.500L4.500 0.500 8.500 4.500v7z" fill="#313335" stroke="#6c6e70" stroke-width="1"/><path d="M2 7.500h5" stroke="#6c6e70" stroke-width="1"/></svg><div class="abs" style="left:86px;top:286px;width:1px;height:22px;background:#393939"></div><div class="abs" style="left:102px;top:286px;width:1px;height:22px;background:#393939"></div><div class="ln" style="top:288.2px"><span class="no" style="top:-0.7px;">82</span><span class="c" style="left:120px"><span class="tg">&lt;/el-col&gt;</span></span></div><svg style="left:62px;top:289.7px" width="9" height="12" viewBox="0 0 9 12"><path d="M0.500 11.500V4.500L4.500 0.500 8.500 4.500v7z" fill="#313335" stroke="#6c6e70" stroke-width="1"/><path d="M2 7.500h5" stroke="#6c6e70" stroke-width="1"/></svg><div class="abs" style="left:86px;top:308px;width:1px;height:22px;background:#393939"></div><div class="abs" style="left:102px;top:308px;width:1px;height:22px;background:#393939"></div><div class="ln" style="top:310.2px"><span class="no" style="top:-0.7px;">83</span><span class="c" style="left:120px"><span class="tg">&lt;el-col </span><span class="at">:span</span><span class="st">="</span><span class="nu">1.5</span><span class="st">"</span><span class="tg">&gt;</span></span></div><svg style="left:62px;top:315px" width="9" height="12" viewBox="0 0 9 12"><path d="M0.500 0.500h8V7.500L4.500 11.500 0.500 7.500z" fill="#313335" stroke="#6c6e70" stroke-width="1"/><path d="M2 4.500h5" stroke="#6c6e70" stroke-width="1"/></svg><div class="abs" style="left:86px;top:330px;width:1px;height:22px;background:#393939"></div><div class="abs" style="left:102px;top:330px;width:1px;height:22px;background:#393939"></div><div class="abs" style="left:118px;top:330px;width:1px;height:22px;background:#393939"></div><div class="ln" style="top:332.2px"><span class="no" style="top:-0.7px;">84</span><span class="c" style="left:136px"><span class="tg">&lt;el-button</span></span></div><svg style="left:62px;top:337px" width="9" height="12" viewBox="0 0 9 12"><path d="M0.500 0.500h8V7.500L4.500 11.500 0.500 7.500z" fill="#313335" stroke="#6c6e70" stroke-width="1"/><path d="M2 4.500h5" stroke="#6c6e70" stroke-width="1"/></svg><div class="abs" style="left:86px;top:352px;width:1px;height:22px;background:#393939"></div><div class="abs" style="left:102px;top:352px;width:1px;height:22px;background:#393939"></div><div class="abs" style="left:118px;top:352px;width:1px;height:22px;background:#393939"></div><div class="abs" style="left:134px;top:352px;width:1px;height:22px;background:#393939"></div><div class="ln" style="top:354.2px"><span class="no" style="top:-0.7px;">85</span><span class="c" style="left:152px"><span class="at">type</span><span class="st">="warning"</span></span></div><div class="abs" style="left:86px;top:374px;width:1px;height:22px;background:#393939"></div><div class="abs" style="left:102px;top:374px;width:1px;height:22px;background:#393939"></div><div class="abs" style="left:118px;top:374px;width:1px;height:22px;background:#393939"></div><div class="abs" style="left:134px;top:374px;width:1px;height:22px;background:#393939"></div><div class="ln" style="top:376.2px"><span class="no" style="top:-0.7px;">86</span><span class="c" style="left:152px"><span class="at">plain</span></span></div><div class="abs" style="left:86px;top:396px;width:1px;height:22px;background:#393939"></div><div class="abs" style="left:102px;top:396px;width:1px;height:22px;background:#393939"></div><div class="abs" style="left:118px;top:396px;width:1px;height:22px;background:#393939"></div><div class="abs" style="left:134px;top:396px;width:1px;height:22px;background:#393939"></div><div class="ln" style="top:398.2px"><span class="no" style="top:-0.7px;">87</span><span class="c" style="left:152px"><span class="at">icon</span><span class="st">="el-icon-download"</span></span></div><div class="abs" style="left:86px;top:418px;width:1px;height:22px;background:#393939"></div><div class="abs" style="left:102px;top:418px;width:1px;height:22px;background:#393939"></div><div class="abs" style="left:118px;top:418px;width:1px;height:22px;background:#393939"></div><div class="abs" style="left:134px;top:418px;width:1px;height:22px;background:#393939"></div><div class="ln" style="top:420.2px"><span class="no" style="top:-0.7px;">88</span><span class="c" style="left:152px"><span class="at">size</span><span class="st">="mini"</span></span></div><div class="abs" style="left:86px;top:440px;width:1px;height:22px;background:#393939"></div><div class="abs" style="left:102px;top:440px;width:1px;height:22px;background:#393939"></div><div class="abs" style="left:118px;top:440px;width:1px;height:22px;background:#393939"></div><div class="abs" style="left:134px;top:440px;width:1px;height:22px;background:#393939"></div><div class="ln" style="top:442.2px"><span class="no" style="top:-0.7px;">89</span><span class="c" style="left:152px"><span class="at">@click</span><span class="st">="</span><span class="fn">handleExport</span><span class="st">"</span></span></div><div class="abs" style="left:168px;top:462px;width:64px;height:22px;background:#52503a"></div><div class="abs" style="left:86px;top:462px;width:1px;height:22px;background:#393939"></div><div class="abs" style="left:102px;top:462px;width:1px;height:22px;background:#393939"></div><div class="abs" style="left:118px;top:462px;width:1px;height:22px;background:#393939"></div><div class="abs" style="left:134px;top:462px;width:1px;height:22px;background:#393939"></div><div class="ln" style="top:464.2px"><span class="no" style="top:-0.7px;">90</span><span class="c" style="left:152px"><span class="at">v-</span><span class="at">hasPermi</span><span class="st">="</span><span class="tx">[</span><span class="js">'honor:honor:export'</span><span class="tx">]</span><span class="st">"</span></span></div><div class="abs" style="left:86px;top:484px;width:1px;height:22px;background:#393939"></div><div class="abs" style="left:102px;top:484px;width:1px;height:22px;background:#393939"></div><div class="abs" style="left:118px;top:484px;width:1px;height:22px;background:#393939"></div><div class="ln" style="top:486.2px"><span class="no" style="top:-0.7px;">91</span><span class="c" style="left:136px"><span class="tg">&gt;</span><span class="tx">导出</span><span class="tg">&lt;/el-button&gt;</span></span></div><svg style="left:62px;top:487.7px" width="9" height="12" viewBox="0 0 9 12"><path d="M0.500 11.500V4.500L4.500 0.500 8.500 4.500v7z" fill="#313335" stroke="#6c6e70" stroke-width="1"/><path d="M2 7.500h5" stroke="#6c6e70" stroke-width="1"/></svg><div class="abs" style="left:86px;top:506px;width:1px;height:22px;background:#393939"></div><div class="abs" style="left:102px;top:506px;width:1px;height:22px;background:#393939"></div><div class="ln" style="top:508.2px"><span class="no" style="top:-0.7px;">92</span><span class="c" style="left:120px"><span class="tg">&lt;/el-col&gt;</span></span></div><svg style="left:62px;top:509.7px" width="9" height="12" viewBox="0 0 9 12"><path d="M0.500 11.500V4.500L4.500 0.500 8.500 4.500v7z" fill="#313335" stroke="#6c6e70" stroke-width="1"/><path d="M2 7.500h5" stroke="#6c6e70" stroke-width="1"/></svg><div class="abs" style="left:86px;top:528px;width:1px;height:22px;background:#393939"></div><div class="abs" style="left:102px;top:528px;width:1px;height:22px;background:#393939"></div><div class="ln" style="top:530.2px"><span class="no" style="top:-0.7px;">93</span><span class="c" style="left:72px"></span></div><div class="abs" style="left:86px;top:550px;width:1px;height:22px;background:#393939"></div><div class="abs" style="left:102px;top:550px;width:1px;height:22px;background:#393939"></div><div class="ln" style="top:552.2px"><span class="no" style="top:-0.7px;">94</span><span class="c" style="left:120px"><span class="tg">&lt;el-col </span><span class="at">:span</span><span class="st">="</span><span class="nu">1.5</span><span class="st">"</span><span class="tg">&gt;</span></span></div><svg style="left:62px;top:557px" width="9" height="12" viewBox="0 0 9 12"><path d="M0.500 0.500h8V7.500L4.500 11.500 0.500 7.500z" fill="#313335" stroke="#6c6e70" stroke-width="1"/><path d="M2 4.500h5" stroke="#6c6e70" stroke-width="1"/></svg><div class="abs" style="left:86px;top:572px;width:1px;height:22px;background:#393939"></div><div class="abs" style="left:102px;top:572px;width:1px;height:22px;background:#393939"></div><div class="abs" style="left:118px;top:572px;width:1px;height:22px;background:#393939"></div><div class="ln" style="top:574.2px"><span class="no" style="top:-0.7px;">95</span><span class="c" style="left:136px"><span class="tg">&lt;el-button</span></span></div><svg style="left:62px;top:579px" width="9" height="12" viewBox="0 0 9 12"><path d="M0.500 0.500h8V7.500L4.500 11.500 0.500 7.500z" fill="#313335" stroke="#6c6e70" stroke-width="1"/><path d="M2 4.500h5" stroke="#6c6e70" stroke-width="1"/></svg><div class="abs" style="left:86px;top:594px;width:1px;height:22px;background:#393939"></div><div class="abs" style="left:102px;top:594px;width:1px;height:22px;background:#393939"></div><div class="abs" style="left:118px;top:594px;width:1px;height:22px;background:#393939"></div><div class="abs" style="left:134px;top:594px;width:1px;height:22px;background:#393939"></div><div class="ln" style="top:596.2px"><span class="no" style="top:-0.7px;">96</span><span class="c" style="left:152px"><span class="at">type</span><span class="st">="info"</span></span></div><div class="abs" style="left:86px;top:616px;width:1px;height:22px;background:#393939"></div><div class="abs" style="left:102px;top:616px;width:1px;height:22px;background:#393939"></div><div class="abs" style="left:118px;top:616px;width:1px;height:22px;background:#393939"></div><div class="abs" style="left:134px;top:616px;width:1px;height:22px;background:#393939"></div><div class="ln" style="top:618.2px"><span class="no" style="top:-0.7px;">97</span><span class="c" style="left:152px"><span class="at">icon</span><span class="st">="el-icon-upload2"</span></span></div><div class="abs" style="left:86px;top:638px;width:1px;height:22px;background:#393939"></div><div class="abs" style="left:102px;top:638px;width:1px;height:22px;background:#393939"></div><div class="abs" style="left:118px;top:638px;width:1px;height:22px;background:#393939"></div><div class="abs" style="left:134px;top:638px;width:1px;height:22px;background:#393939"></div><div class="ln" style="top:640.2px"><span class="no" style="top:-0.7px;">98</span><span class="c" style="left:152px"><span class="at">size</span><span class="st">="mini"</span></span></div><div class="abs" style="left:86px;top:660px;width:1px;height:22px;background:#393939"></div><div class="abs" style="left:102px;top:660px;width:1px;height:22px;background:#393939"></div><div class="abs" style="left:118px;top:660px;width:1px;height:22px;background:#393939"></div><div class="abs" style="left:134px;top:660px;width:1px;height:22px;background:#393939"></div><div class="ln" style="top:662.2px"><span class="no" style="top:-0.7px;">99</span><span class="c" style="left:152px"><span class="at">@click</span><span class="st">="</span><span class="fn">handleImport</span><span class="st">"</span></span></div><div class="abs" style="left:67px;top:682px;width:719px;height:22px;background:#323232"></div><div class="abs" style="left:168px;top:682px;width:64px;height:22px;background:#52503a"></div><div class="abs" style="left:86px;top:682px;width:1px;height:22px;background:#393939"></div><div class="abs" style="left:102px;top:682px;width:1px;height:22px;background:#393939"></div><div class="abs" style="left:118px;top:682px;width:1px;height:22px;background:#393939"></div><div class="abs" style="left:134px;top:682px;width:1px;height:22px;background:#393939"></div><div class="ln" style="top:684.2px"><span class="no" style="top:-0.7px;color:#a4a3a3">100</span><span class="c" style="left:152px"><span class="at">v-</span><span class="at">hasPermi</span><span class="st">="</span><span class="tx">[</span><span class="js">'system:honor:import'</span><span class="tx">]</span><span class="st">"</span></span></div><div class="abs" style="left:86px;top:704px;width:1px;height:22px;background:#393939"></div><div class="abs" style="left:102px;top:704px;width:1px;height:22px;background:#393939"></div><div class="abs" style="left:118px;top:704px;width:1px;height:22px;background:#393939"></div><div class="ln" style="top:706.2px"><span class="no" style="top:-0.7px;">101</span><span class="c" style="left:136px"><span class="tg">&gt;</span><span class="tx">导入</span><span class="tg">&lt;/el-button&gt;</span></span></div><svg style="left:62px;top:707.7px" width="9" height="12" viewBox="0 0 9 12"><path d="M0.500 11.500V4.500L4.500 0.500 8.500 4.500v7z" fill="#313335" stroke="#6c6e70" stroke-width="1"/><path d="M2 7.500h5" stroke="#6c6e70" stroke-width="1"/></svg><div class="abs" style="left:86px;top:726px;width:1px;height:22px;background:#393939"></div><div class="abs" style="left:102px;top:726px;width:1px;height:22px;background:#393939"></div><div class="ln" style="top:728.2px"><span class="no" style="top:-0.7px;">102</span><span class="c" style="left:120px"><span class="tg">&lt;/el-col&gt;</span></span></div><svg style="left:62px;top:729.7px" width="9" height="12" viewBox="0 0 9 12"><path d="M0.500 11.500V4.500L4.500 0.500 8.500 4.500v7z" fill="#313335" stroke="#6c6e70" stroke-width="1"/><path d="M2 7.500h5" stroke="#6c6e70" stroke-width="1"/></svg><div class="abs" style="left:86px;top:748px;width:1px;height:22px;background:#393939"></div><div class="abs" style="left:102px;top:748px;width:1px;height:22px;background:#393939"></div><div class="ln" style="top:750.2px"><span class="no" style="top:-0.7px;">103</span><span class="c" style="left:72px"></span></div><div class="abs" style="left:86px;top:770px;width:1px;height:22px;background:#393939"></div><div class="abs" style="left:102px;top:770px;width:1px;height:22px;background:#393939"></div><div class="ln" style="top:772.2px"><span class="no" style="top:-0.7px;">104</span><span class="c" style="left:120px"><span class="tg">&lt;right-toolbar </span><span class="at">:showSearch.sync</span><span class="st">="</span><span class="pu">showSearch</span><span class="st">" </span><span class="at">@queryTable</span><span class="st">="</span><span class="fn">getList</span><span class="st">"</span><span class="tg">&gt;&lt;/right-toolbar&gt;</span></span></div><div class="abs" style="left:86px;top:792px;width:1px;height:22px;background:#393939"></div><div class="ln" style="top:794.2px"><span class="no" style="top:-0.7px;">105</span><span class="c" style="left:104px"><span class="tg">&lt;/el-row&gt;</span></span></div><svg style="left:62px;top:795.7px" width="9" height="12" viewBox="0 0 9 12"><path d="M0.500 11.500V4.500L4.500 0.500 8.500 4.500v7z" fill="#313335" stroke="#6c6e70" stroke-width="1"/><path d="M2 7.500h5" stroke="#6c6e70" stroke-width="1"/></svg><div class="abs" style="left:86px;top:814px;width:1px;height:22px;background:#393939"></div><div class="ln" style="top:816.2px"><span class="no" style="top:-0.7px;">106</span><span class="c" style="left:72px"></span></div><div class="abs" style="left:74px;top:841px;width:505px;height:16px;background:#434547"></div><div class="abs" style="left:200px;top:836px;width:56px;height:22px;background:#52503a"></div><div class="abs" style="left:86px;top:836px;width:1px;height:22px;background:#393939"></div><div class="ln" style="top:838.2px"><span class="no" style="top:-0.7px;">107</span><span class="c" style="left:104px"><span class="tg">&lt;el-table </span><span class="at">v-</span><span class="at">loading</span><span class="st">="</span><span class="pu">loading</span><span class="st">" </span><span class="at">:data</span><span class="st">="</span><span class="pu">honorList</span><span class="st">" </span><span class="at">@selection-change</span><span class="st">="</span><span class="fn">handleSelectionChange</span><span class="st">"</span><span class="tg">&gt;</span></span></div><svg style="left:62px;top:843px" width="9" height="12" viewBox="0 0 9 12"><path d="M0.500 0.500h8V7.500L4.500 11.500 0.500 7.500z" fill="#313335" stroke="#6c6e70" stroke-width="1"/><path d="M2 4.500h5" stroke="#6c6e70" stroke-width="1"/></svg></div>
<div class="abs" style="left:922px;top:235px;width:14px;height:2px;background:#c9a227;"></div>
<div class="abs" style="left:922px;top:259px;width:14px;height:2px;background:#c9a227;"></div>
<div class="abs" style="left:922px;top:284px;width:14px;height:2px;background:#c9a227;"></div>
<div class="abs" style="left:922px;top:305px;width:14px;height:2px;background:#c9a227;"></div>
<div class="abs" style="left:922px;top:327px;width:14px;height:2px;background:#c9a227;"></div>
<div class="abs" style="left:922px;top:343px;width:14px;height:2px;background:#c9a227;"></div>
<div class="abs" style="left:922px;top:360px;width:14px;height:4px;background:#7d775f;"></div>
<div class="abs" style="left:922px;top:371px;width:14px;height:2px;background:#7d775f;"></div>
<div class="abs" style="left:922px;top:384px;width:14px;height:2px;background:#c9a227;"></div>
<div class="abs" style="left:922px;top:400px;width:14px;height:2px;background:#c9a227;"></div>
<div class="abs" style="left:922px;top:649px;width:14px;height:2px;background:#7d775f;"></div>
<div class="abs" style="left:922px;top:653px;width:14px;height:2px;background:#7d775f;"></div>
<div class="abs" style="left:922px;top:783px;width:14px;height:2px;background:#c9a227;"></div>
<div class="abs" style="left:922px;top:796px;width:14px;height:2px;background:#c9a227;"></div>
<div class="abs" style="left:922px;top:869px;width:14px;height:2px;background:#7d775f;"></div>
<div class="abs" style="left:922px;top:880px;width:14px;height:2px;background:#c9a227;"></div>
<div class="abs" style="left:922px;top:888px;width:14px;height:2px;background:#c9a227;"></div>
<div class="abs" style="left:922px;top:895px;width:14px;height:2px;background:#7d775f;"></div>
<div class="abs" style="left:922px;top:908px;width:14px;height:2px;background:#7d775f;"></div>
<div class="abs" style="left:927px;top:260px;width:9px;height:84px;background:rgba(166,166,166,.28);"></div>
<svg style="left:829px;top:91.5px;" width="12" height="12" viewBox="0 0 12 12"><path d="M6 0.500L12 11.500H0z" fill="#d2a520"/><path d="M6 4.500v3.300M6 8.800v1.500" stroke="#2b2b2b" stroke-width="1.500"/></svg>
<div class="t" style="left:844px;top:89px;font-size:13px;color:#bbb;">15</div>
<svg style="left:866.5px;top:91.5px;" width="12" height="12" viewBox="0 0 12 12"><path d="M6 0.500L12 11.500H0z" fill="#8c8169"/><path d="M6 4.500v3.300M6 8.800v1.500" stroke="#2b2b2b" stroke-width="1.500"/></svg>
<div class="t" style="left:881px;top:89px;font-size:13px;color:#bbb;">8</div>
<svg style="left:899px;top:93.8px;" width="10" height="7" viewBox="0 0 10 7"><path d="M1 5.500l3.800-4L8.600 5.500" stroke="#c8c8c8" stroke-width="1.500" fill="none"/></svg>
<svg style="left:919.5px;top:94.8px;" width="10" height="7" viewBox="0 0 10 7"><path d="M1 1l3.800 4L8.600 1" stroke="#c8c8c8" stroke-width="1.500" fill="none"/></svg>
<div class="abs" style="left:936px;top:58px;width:22px;height:906px;background:#3c3f41;border-left:1px solid #323232"></div>
<div class="t" style="left:941px;top:62px;font:italic bold 15.500px/20px 'Liberation Sans',sans-serif;color:#afb1b3">m</div>
<div class="t" style="left:952px;top:85px;font-size:11.5px;color:#bbb;transform-origin:0 0;transform:rotate(90deg);line-height:14px">Maven</div>
<svg style="left:942px;top:140px;" width="11" height="12" viewBox="0 0 11 12"><ellipse cx="5.500" cy="2.500" rx="5.500" ry="2.500" fill="#afb1b3"/><path d="M0 4.200c1 1.600 10 1.600 11 0v1.800c-1 1.600-10 1.600-11 0zM0 7.200c1 1.600 10 1.600 11 0v1.800c-1 1.600-10 1.600-11 0z" fill="#afb1b3"/><path d="M0 10.200c1 1.600 10 1.600 11 0v0c-1 2.400-10 2.400-11 0z" fill="#afb1b3"/></svg>
<div class="t" style="left:953px;top:156px;font-size:10.8px;color:#bbb;transform-origin:0 0;transform:rotate(90deg);line-height:14px">数据库</div>
<svg style="left:942px;top:213px;" width="11" height="10" viewBox="0 0 11 10"><path d="M0 0h3v2H0zM4 0h3v2H4zM8 0h3v2H8zM0 3h3v2H0zM4 3h3v2H4zM8 3h3v2H8zM0 6h3v2H0zM4 6h3v2H4zM8 6h3v2H8z" fill="#afb1b3"/></svg>
<div class="t" style="left:952.7px;top:228px;font-size:11.5px;color:#bbb;transform-origin:0 0;transform:rotate(90deg);line-height:14px">SciView</div>
<svg style="left:941px;top:286px;" width="13" height="14" viewBox="0 0 13 14"><path d="M6 1.500c3 0 4 2.500 4 5l1.500 3.500H0.500L2 6.500c0-2.500 1-5 4-5z" fill="#afb1b3"/><path d="M4.500 11.500h3v1.500h-3z" fill="#afb1b3"/><circle cx="10.500" cy="2.500" r="2.500" fill="#e05555"/></svg>
<div class="t" style="left:953px;top:304px;font-size:10.8px;color:#bbb;transform-origin:0 0;transform:rotate(90deg);line-height:14px">通知</div>
<div class="abs" style="left:150px;top:935px;width:786px;height:23px;background:#313335;"></div>
<div class="t" style="left:161px;top:937px;font-size:13.2px;color:#bbb;">template</div>
<div class="t" style="left:236px;top:937px;font-size:13.2px;color:#bbb;">div.app-container</div>
<div class="t" style="left:362px;top:937px;font-size:13.2px;color:#bbb;">el-row.mb8</div>
<div class="t" style="left:452px;top:937px;font-size:13.2px;color:#bbb;">el-col</div>
<div class="t" style="left:508px;top:937px;font-size:13.2px;color:#bbb;">el-button</div>
<svg style="left:220px;top:943px;" width="6" height="9" viewBox="0 0 6 9"><path d="M1 0.500l3.500 4L1 8.500" stroke="#7a7d80" stroke-width="1" fill="none"/></svg>
<svg style="left:346px;top:943px;" width="6" height="9" viewBox="0 0 6 9"><path d="M1 0.500l3.500 4L1 8.500" stroke="#7a7d80" stroke-width="1" fill="none"/></svg>
<svg style="left:436px;top:943px;" width="6" height="9" viewBox="0 0 6 9"><path d="M1 0.500l3.500 4L1 8.500" stroke="#7a7d80" stroke-width="1" fill="none"/></svg>
<svg style="left:492px;top:943px;" width="6" height="9" viewBox="0 0 6 9"><path d="M1 0.500l3.500 4L1 8.500" stroke="#7a7d80" stroke-width="1" fill="none"/></svg>
<div class="abs" style="left:22px;top:958px;width:936px;height:6px;background:#3c3f41;border-top:1px solid #323232"></div>
<div class="t" style="left:850.5px;top:938px;font-size:13.5px;color:#cfcfcf;letter-spacing:-0.32px">CSDN @Founless</div>
<div class="abs" style="left:250px;top:629px;width:386px;height:212px;border:4px solid #fb2018;border-radius:7px"></div>
<div class="abs" style="left:466.500px;top:765px;width:45px;height:24px;border:1.400px solid #f5281e;border-radius:4px"></div>
<svg style="left:495px;top:730px;" width="32" height="32" viewBox="0 0 32 32"><path d="M2 29L3.200 27.300 19.500 10.500 15 6.500 29 3.500 24 16.500 21 13z" fill="#fb2018"/></svg>
<div class="t" style="left:531px;top:706px;font-size:25px;line-height:34px;color:#fb2018;font-weight:350;font-family:'Noto Sans CJK SC',sans-serif">修改名字</div></div><div class="abs" style="left:960px;top:0;width:2px;height:964px;background:#6f6f6f"></div>
<div class="abs" style="left:1px;top:0;width:1px;height:964px;background:#9a9a9a"></div>
<div class="abs" style="left:962px;top:0;width:13px;height:964px;background:#f8f8f8"></div>
<div class="abs" style="left:970px;top:78px;width:5px;height:1px;background:#c8c8c8"></div>
<div class="abs" style="left:970px;top:157px;width:10px;height:32px;background:#fff;border:1px solid #e4e4e4;border-radius:4px;box-shadow:0 1px 4px rgba(0,0,0,.12)"></div>
<div class="abs" style="left:970px;top:194px;width:5px;height:1px;background:#d8d8d8"></div></body></html>
